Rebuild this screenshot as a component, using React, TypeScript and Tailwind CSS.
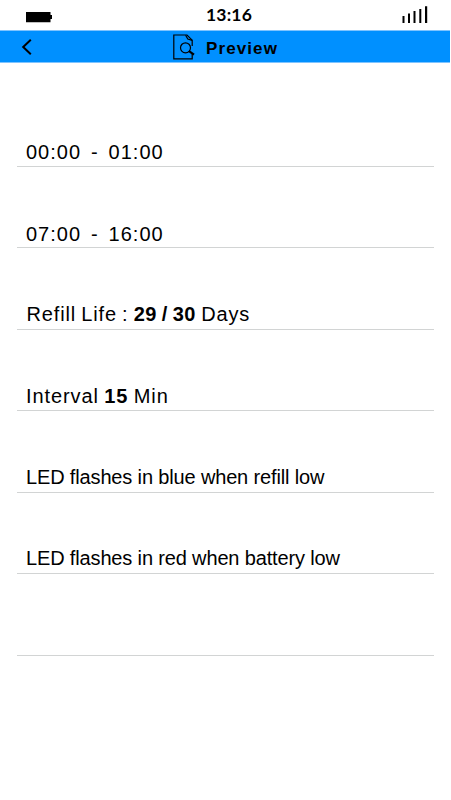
import type { ReactNode } from 'react';
import clsx from 'clsx';

interface Row {
  id: string;
  content: ReactNode;
  height: string;
  className: string;
}

const rows: Row[] = [
  { id: 'slot-1', content: '00:00 - 01:00', height: 'h-[104px]', className: 'pb-[2px] pl-[9px] tracking-[1px] [word-spacing:3.4px]' },
  { id: 'slot-2', content: '07:00 - 16:00', height: 'h-[81px]', className: 'pb-[1px] pl-[9px] tracking-[1px] [word-spacing:3.4px]' },
  {
    id: 'refill',
    content: (
      <>
        Refill Life : <b className="tracking-[0.5px]">29 / 30</b> Days
      </>
    ),
    height: 'h-[82px]',
    className: 'pb-[3px] pl-[9.5px] tracking-[0.85px] [word-spacing:-1.2px]',
  },
  {
    id: 'interval',
    content: (
      <>
        Interval <b>15</b> Min
      </>
    ),
    height: 'h-[81px]',
    className: 'pb-[2px] pl-[9px] tracking-[0.9px] [word-spacing:-1px]',
  },
  { id: 'led-blue', content: 'LED flashes in blue when refill low', height: 'h-[82px]', className: 'pb-[3px] pl-[9px] tracking-[-0.15px]' },
  { id: 'led-red', content: 'LED flashes in red when battery low', height: 'h-[81px]', className: 'pb-[3px] pl-[9px] tracking-[-0.15px]' },
  { id: 'empty', content: null, height: 'h-[82px]', className: '' },
];

function StatusBar() {
  return (
    <div className="flex h-[30px] justify-between pr-[23px] pl-[26px]">
      <svg className="mt-[12px]" width="26" height="11" viewBox="0 0 26 11">
        <path d="M0 0h24.5v3H26v4h-1.5v3.3H0z" />
      </svg>
      <span className="ml-[4px] font-['Lato'] text-[17.5px] leading-[30px] font-bold tracking-[0.2px]">13:16</span>
      <svg className="mt-[6px]" width="26" height="18" viewBox="0 0 26 18">
        <path d="M0.5 10h2v7h-2zM6 7.5h2v9.5h-2zM11.5 5h2v12h-2zM17.3 3h2v14h-2zM23 0.3h2.2v16.7h-2.2z" />
      </svg>
    </div>
  );
}

function Header() {
  return (
    <header className="flex h-[33px] w-[450px] items-center border-y border-[#7fc4ff] bg-[#0090ff]">
      <svg className="ml-[21px]" width="12" height="18" viewBox="0 0 12 18" fill="none" stroke="black" strokeWidth="2">
        <path d="M9.8 1.8 2.2 9l7.6 7.2" />
      </svg>
      <svg className="mt-[1px] ml-[140px]" width="22" height="26" viewBox="0 0 22 26" fill="none" stroke="black" strokeWidth="1.2">
        <path d="M19.2 12V6.2L14 1H.8v23.8h18.4V20" />
        <path d="M12.6 1.2 14.8 5l4.4 1.4" />
        <circle cx="12.5" cy="13.8" r="5" />
        <path d="M16 17.2l5 3.4" strokeWidth="2.2" />
      </svg>
      <h1 className="ml-[11px] pt-[3px] text-[17px] leading-none font-bold tracking-[1.1px]">Preview</h1>
    </header>
  );
}

export default function App() {
  return (
    <div className="h-[800px] w-[451px] overflow-hidden bg-white font-['Liberation_Sans',Arial,sans-serif] text-black">
      <StatusBar />
      <Header />
      <main className="mr-[17px] ml-[17px]">
        {rows.map((row) => (
          <div
            key={row.id}
            className={clsx(
              'flex items-end border-b border-[#d2d4d4] text-[20px] leading-[24px] whitespace-nowrap',
              row.height,
              row.className
            )}
          >
            <p>{row.content}</p>
          </div>
        ))}
      </main>
    </div>
  );
}
